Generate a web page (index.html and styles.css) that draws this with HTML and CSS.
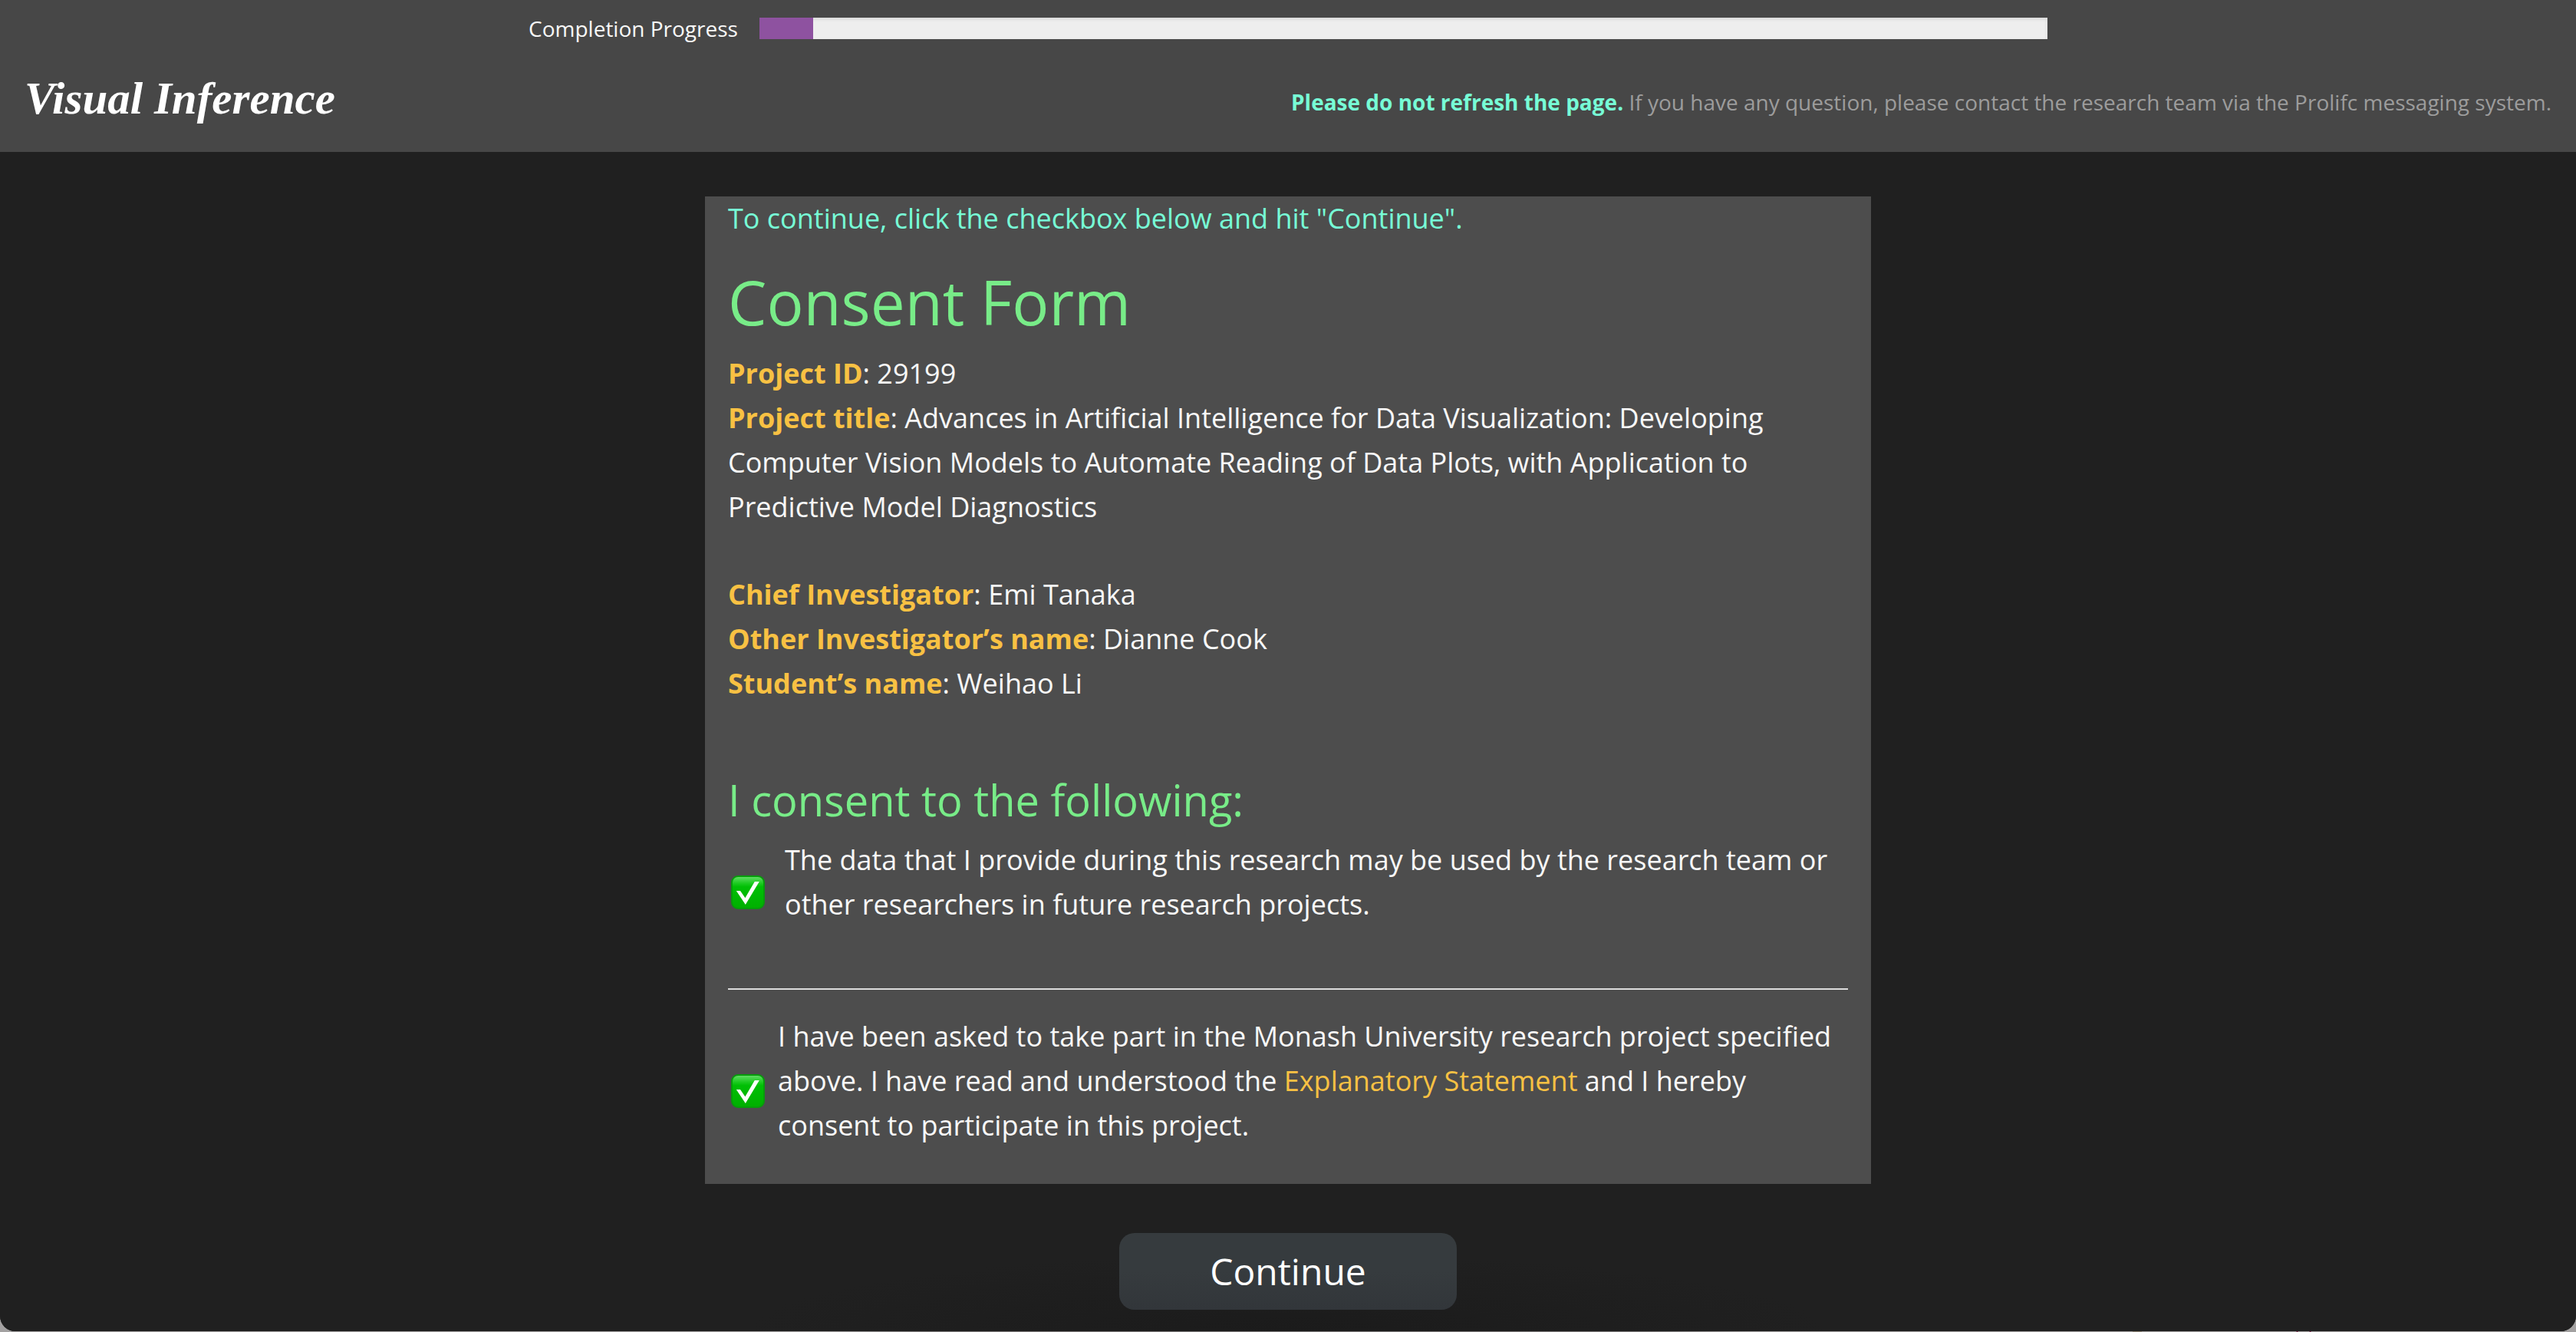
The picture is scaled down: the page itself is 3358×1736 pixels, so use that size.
FILE: index.html
```html
<!DOCTYPE html>
<html lang="en">
<head>
<meta charset="utf-8">
<meta name="viewport" content="width=device-width, initial-scale=1">
<title>Visual Inference</title>
<link rel="stylesheet" href="styles.css">
</head>
<body>
<div class="app">
  <header class="header">
    <div class="progress-row">
      <span class="progress-label" id="progress-label">Completion Progress</span>
      <div class="progress" role="progressbar" aria-labelledby="progress-label" aria-valuemin="0" aria-valuemax="24" aria-valuenow="1">
        <div class="progress-fill" style="width: 4.17%"></div>
      </div>
    </div>
    <div class="brand-row">
      <div class="brand">Visual Inference</div>
      <p class="notice"><strong>Please do not refresh the page.</strong> If you have any question, please contact the research team via the Prolifc messaging system.</p>
    </div>
  </header>

  <main class="main">
    <section class="card">
      <p class="hint">To continue, click the checkbox below and hit "Continue".</p>
      <h1 class="title">Consent Form</h1>
      <p><b>Project ID</b>: 29199</p>
      <p><b>Project title</b>: Advances in Artificial Intelligence for Data Visualization: Developing Computer Vision Models to Automate Reading of Data Plots, with Application to Predictive Model Diagnostics</p>
      <div class="people">
        <p><b>Chief Investigator</b>: Emi Tanaka</p>
        <p><b>Other Investigator’s name</b>: Dianne Cook</p>
        <p><b>Student’s name</b>: Weihao Li</p>
      </div>
      <h2 class="subtitle">I consent to the following:</h2>
      <div class="consent consent-data">
        <input class="check" type="checkbox" id="consent-data" checked>
        <label for="consent-data">The data that I provide during this research may be used by the research team or other researchers in future research projects.</label>
      </div>
      <hr class="rule">
      <div class="consent consent-join">
        <input class="check" type="checkbox" id="consent-join" checked>
        <label for="consent-join">I have been asked to take part in the Monash University research project specified above. I have read and understood the <a href="#statement">Explanatory Statement</a> and I hereby consent to participate in this project.</label>
      </div>
    </section>
    <button class="continue" type="button">Continue</button>
  </main>
</div>
<div class="backdrop" aria-hidden="true">
  <svg class="marks" width="520" height="3" viewBox="2515 0 520 3">
    <path stroke="#111" stroke-width="3" d="M2517 1v2M2528 1v2M2534 1v2M2543 1v2M2562 1v2M2568 1v2M2609 1v2M2627 1v2M2640 1v2M2649 1v2M2656 1v2M2692 2v1M2702 1v2M2715 1v2M2730 1v2M2744 1v2M2816 1v2M2827 1v2M2833 1v2M2842 1v2M2860 1v2M2868 1v2M2903 2v1M2913 1v2M2927 1v2M2942 1v2M2956 1v2"/>
    <path stroke="#7d6a4a" stroke-width="3" d="M2977 1v2M2780 2h12"/>
    <path stroke="#7a1846" stroke-width="4" d="M2996 1l-2 2M3013 1l-2 2"/>
  </svg>
</div>
</body>
</html>
```
FILE: styles.css
```css
* {
  box-sizing: border-box;
}

body {
  margin: 0;
  background: #a3a1a1;
  color: #f8f8f8;
  font: 36px/58px "Open Sans", "Noto Sans", sans-serif;
}

p, h1, h2 {
  margin: 0;
  font-weight: 400;
}

.app {
  display: flex;
  flex-direction: column;
  min-height: calc(100vh - 3px);
  overflow: hidden;
  border-radius: 0 0 20px 20px;
  background: #202020;
}

.header {
  height: 198px;
  padding: 16px 32px 0;
  background: #474747;
}

.progress-row {
  display: flex;
  justify-content: center;
  align-items: center;
  gap: 28px;
}

.progress-label {
  font-size: 28px;
  line-height: 42px;
}

.progress {
  width: 50vw;
  height: 28px;
  background: #eee;
  box-shadow: inset 0 2px 4px rgba(0, 0, 0, 0.1);
}

.progress-fill {
  height: 100%;
  background: #8e52a0;
}

.brand-row {
  display: flex;
  justify-content: space-between;
  align-items: center;
  padding-top: 20px;
}

.brand {
  color: #fff;
  font: italic 700 59px/100px cursive;
}

.notice {
  padding-top: 10px;
  color: #9c9c9c;
  font-size: 28px;
  line-height: 40px;
}

.notice strong {
  color: #77fcd6;
}

.main {
  display: flex;
  flex: 1;
  flex-direction: column;
  align-items: center;
  padding: 58px 30px 28px;
  background: radial-gradient(700px 100px at bottom, #1b1b1b, #202020);
}

.card {
  width: 100%;
  max-width: 1520px;
  padding: 0 30px 47px;
  background: #4d4d4d;
}

.card b {
  color: #f8c143;
}

.hint {
  color: #77fcd6;
}

.title {
  margin: 23px 0 9px;
  color: #78ec88;
  font-size: 80px;
  line-height: 112px;
}

.people {
  margin: 56px 0 82px;
}

.subtitle {
  margin-bottom: 10px;
  color: #78ec88;
  font-size: 56px;
  line-height: 80px;
}

.consent {
  display: flex;
  align-items: center;
}

.consent-data {
  gap: 26px;
}

.consent-join {
  gap: 17px;
}

.consent a {
  color: #f8c143;
  text-decoration: none;
}

.check {
  flex: none;
  width: 44px;
  height: 44px;
  margin: 26px 0 0 4px;
  appearance: none;
  border: 2px solid #079c0b;
  border-radius: 9px;
  background: linear-gradient(#5fdc62, #1ecb22 20%, #00bf05 32%, #00b000);
}

.check:checked::before {
  display: block;
  width: 40px;
  height: 40px;
  background: #fff;
  clip-path: polygon(12% 45%, 25% 45%, 41% 68%, 72% 15%, 87% 15%, 42% 90%);
  content: "";
}

.rule {
  height: 2px;
  margin: 80px 0 32px;
  border: 0;
  background: #dcdcdc;
}

.continue {
  width: 440px;
  height: 100px;
  margin-top: 64px;
  border: 0;
  border-radius: 20px;
  background: linear-gradient(#363b3e 50%, #32363a);
  color: #fff;
  font: 48px/64px "Open Sans", "Noto Sans", sans-serif;
}

.backdrop {
  display: flex;
  justify-content: flex-end;
  padding-right: 323px;
  background: linear-gradient(to right, #a3a1a1 32%, #7c7979 36%, #7c7979 64%, #a3a1a1 68%);
}

.marks {
  display: block;
}
```
